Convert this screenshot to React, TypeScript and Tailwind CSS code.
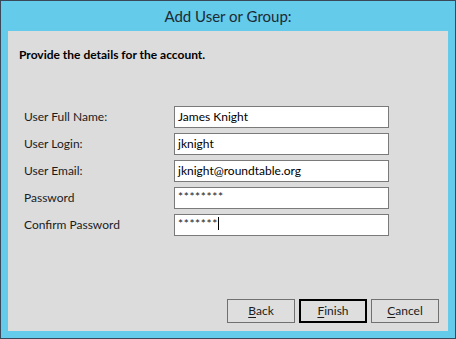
import { FC } from 'react';

const fields = [
  { label: 'User Full Name:', value: 'James Knight' },
  { label: 'User Login:', value: 'jknight' },
  { label: 'User Email:', value: 'jknight@roundtable.org' },
  { label: 'Password', value: '********', secret: true },
  { label: 'Confirm Password', value: '*******', secret: true, caret: true },
];

const Field: FC<{ label: string; value: string; secret?: boolean; caret?: boolean }> = ({
  label,
  value,
  secret,
  caret,
}) => (
  <div className="flex items-center h-[22px]">
    <div className="w-[150px] text-[12px] text-[#1b1b1b] leading-none">{label}</div>
    <div className="w-[215px] h-[22px] bg-white border border-[#7a7a7a] flex items-center px-[3px]">
      <span
        className={
          secret
            ? 'text-[12px] tracking-[0.6px] leading-none -mt-[2px] text-[#1b1b1b]'
            : 'text-[12px] leading-none text-black'
        }
      >
        {value}
      </span>
      {caret && <span className="w-px h-[13px] bg-black -mt-[3px]" />}
    </div>
  </div>
);

const Button: FC<{ label: string; hot: string; primary?: boolean }> = ({ label, hot, primary }) => (
  <button
    className={
      'w-[68px] h-[24px] bg-[#dedede] text-[12px] text-[#1b1b1b] flex items-center justify-center ' +
      (primary ? 'border-2 border-black' : 'border border-[#707070]')
    }
  >
    <span className="underline decoration-1 underline-offset-2 [text-decoration-skip-ink:none]">{hot}</span>
    <span>{label.slice(1)}</span>
  </button>
);

export default function App() {
  return (
    <div
      className="w-[456px] h-[339px] bg-[#64cbea] border border-[#39495a] flex flex-col"
      style={{ fontFamily: 'Lato, "Noto Sans", sans-serif' }}
    >
      <div className="h-[30px] flex items-center justify-center text-[15px] text-[#1e2a33]">
        Add User or Group:
      </div>
      <div className="mx-[7px] mb-[7px] flex-1 bg-[#dcdcdc] flex flex-col">
        <div className="pl-[11px] pt-[18px] text-[12px] font-bold text-black leading-none">
          Provide the details for the account.
        </div>
        <div className="mt-[45px] pl-[16px] flex flex-col gap-[5px]">
          {fields.map((f) => (
            <Field key={f.label} {...f} />
          ))}
        </div>
        <div className="mt-auto mb-[8px] mr-[9px] flex justify-end gap-[4px]">
          <Button label="Back" hot="B" />
          <Button label="Finish" hot="F" primary />
          <Button label="Cancel" hot="C" />
        </div>
      </div>
    </div>
  );
}
